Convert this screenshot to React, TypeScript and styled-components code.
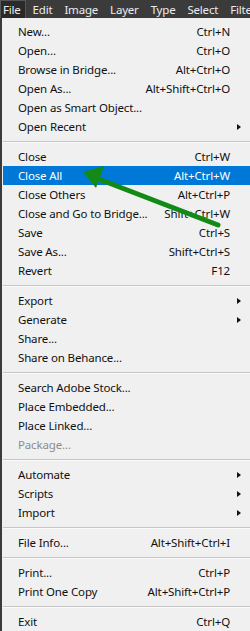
import styled, { createGlobalStyle } from "styled-components";

const GlobalStyle = createGlobalStyle`
  html, body {
    margin: 0;
    padding: 0;
    background: #3b3b3b;
  }
  body {
    font-family: "Noto Sans", "Open Sans", sans-serif;
    font-size: 11.5px;
  }
`;

const Frame = styled.div`
  position: relative;
  width: 250px;
  height: 631px;
  overflow: hidden;
  background: #3b3b3b;
  display: flex;
  flex-direction: column;
`;

const MenuBar = styled.div`
  height: 18px;
  display: flex;
  align-items: stretch;
  white-space: nowrap;
`;

const BarItem = styled.div<{ active?: boolean }>`
  display: flex;
  align-items: center;
  padding: 0 4px 0 2px;
  margin-right: 4px;
  color: #ececec;
  font-size: 11.5px;
  letter-spacing: -0.2px;
  background: ${(p) => (p.active ? "#2a2a2a" : "transparent")};
  border: 1px solid ${(p) => (p.active ? "#555" : "transparent")};
  border-bottom: none;
`;

const Panel = styled.div`
  flex: 1;
  margin-left: 2px;
  background: #f0f0f0;
  padding-top: 4px;
  display: flex;
  flex-direction: column;
`;

const Row = styled.div<{ highlight?: boolean; disabled?: boolean }>`
  height: 19px;
  display: grid;
  grid-template-columns: 1fr auto 20px;
  align-items: center;
  padding-left: 15px;
  margin-left: 1px;
  letter-spacing: -0.15px;
  background: ${(p) => (p.highlight ? "#0078d7" : "transparent")};
  color: ${(p) => (p.highlight ? "#ffffff" : p.disabled ? "#8d8d8d" : "#111111")};
  white-space: nowrap;
`;

const Label = styled.span`
  overflow: hidden;
`;

const Shortcut = styled.span`
  text-align: right;
  padding-left: 6px;
`;

const SubArrow = styled.span`
  justify-self: start;
  margin-left: 7px;
  width: 0;
  height: 0;
  border-top: 3.5px solid transparent;
  border-bottom: 3.5px solid transparent;
  border-left: 4px solid #111;
`;

const Separator = styled.div`
  height: 11px;
  display: flex;
  align-items: center;
  margin-left: 1px;
  &::after {
    content: "";
    flex: 1;
    height: 1px;
    background: #c5c5c5;
    box-shadow: 0 1px 0 #fbfbfb;
  }
`;

const ArrowOverlay = styled.svg`
  position: absolute;
  left: 0;
  top: 0;
  pointer-events: none;
`;

type Item =
  | { sep: true }
  | { label: string; keys?: string; sub?: boolean; hl?: boolean; off?: boolean };

const items: Item[] = [
  { label: "New...", keys: "Ctrl+N" },
  { label: "Open...", keys: "Ctrl+O" },
  { label: "Browse in Bridge...", keys: "Alt+Ctrl+O" },
  { label: "Open As...", keys: "Alt+Shift+Ctrl+O" },
  { label: "Open as Smart Object..." },
  { label: "Open Recent", sub: true },
  { sep: true },
  { label: "Close", keys: "Ctrl+W" },
  { label: "Close All", keys: "Alt+Ctrl+W", hl: true },
  { label: "Close Others", keys: "Alt+Ctrl+P" },
  { label: "Close and Go to Bridge...", keys: "Shift+Ctrl+W" },
  { label: "Save", keys: "Ctrl+S" },
  { label: "Save As...", keys: "Shift+Ctrl+S" },
  { label: "Revert", keys: "F12" },
  { sep: true },
  { label: "Export", sub: true },
  { label: "Generate", sub: true },
  { label: "Share..." },
  { label: "Share on Behance..." },
  { sep: true },
  { label: "Search Adobe Stock..." },
  { label: "Place Embedded..." },
  { label: "Place Linked..." },
  { label: "Package...", off: true },
  { sep: true },
  { label: "Automate", sub: true },
  { label: "Scripts", sub: true },
  { label: "Import", sub: true },
  { sep: true },
  { label: "File Info...", keys: "Alt+Shift+Ctrl+I" },
  { sep: true },
  { label: "Print...", keys: "Ctrl+P" },
  { label: "Print One Copy", keys: "Alt+Shift+Ctrl+P" },
  { sep: true },
  { label: "Exit", keys: "Ctrl+Q" },
];

const bar = ["File", "Edit", "Image", "Layer", "Type", "Select", "Filter"];

export default function App() {
  return (
    <>
      <GlobalStyle />
      <Frame>
        <MenuBar>
          {bar.map((b, i) => (
            <BarItem key={b} active={i === 0}>
              {b}
            </BarItem>
          ))}
        </MenuBar>
        <Panel>
          {items.map((it, i) =>
            "sep" in it ? (
              <Separator key={"s" + i} />
            ) : (
              <Row key={it.label} highlight={it.hl} disabled={it.off}>
                <Label>{it.label}</Label>
                <Shortcut>{it.keys}</Shortcut>
                {it.sub ? <SubArrow /> : <span />}
              </Row>
            )
          )}
        </Panel>
        <ArrowOverlay width="250" height="631" viewBox="0 0 250 631">
          <line
            x1="218"
            y1="225"
            x2="96"
            y2="178"
            stroke="#138a16"
            strokeWidth="5"
            strokeLinecap="round"
          />
          <polygon points="83,172 104,166 96,188" fill="#138a16" />
        </ArrowOverlay>
      </Frame>
    </>
  );
}
